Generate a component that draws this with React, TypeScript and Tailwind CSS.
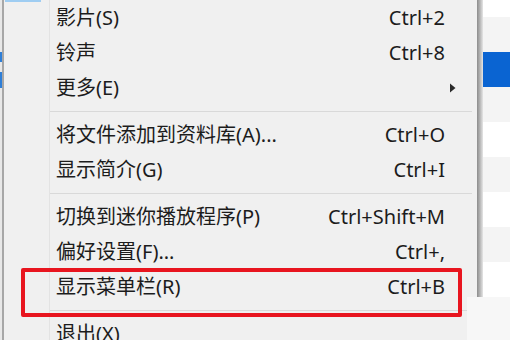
type Item =
  | { kind: "row"; label: string; shortcut?: string; submenu?: boolean }
  | { kind: "sep" };

const items: Item[] = [
  { kind: "row", label: "影片(S)", shortcut: "Ctrl+2" },
  { kind: "row", label: "铃声", shortcut: "Ctrl+8" },
  { kind: "row", label: "更多(E)", submenu: true },
  { kind: "sep" },
  { kind: "row", label: "将文件添加到资料库(A)...", shortcut: "Ctrl+O" },
  { kind: "row", label: "显示简介(G)", shortcut: "Ctrl+I" },
  { kind: "sep" },
  { kind: "row", label: "切换到迷你播放程序(P)", shortcut: "Ctrl+Shift+M" },
  { kind: "row", label: "偏好设置(F)...", shortcut: "Ctrl+," },
  { kind: "row", label: "显示菜单栏(R)", shortcut: "Ctrl+B" },
  { kind: "sep" },
  { kind: "row", label: "退出(X)" },
];

function MenuRow({ item }: { item: Item }) {
  if (item.kind === "sep") {
    return (
      <div className="h-[12px] shrink-0 flex items-center pr-[5px]">
        <div className="h-px w-full bg-[#d9d9d9]" />
      </div>
    );
  }
  return (
    <div className="h-[35px] shrink-0 flex items-center pl-[6px] pr-[32px]">
      <span className="flex-1 whitespace-nowrap">{item.label}</span>
      {item.shortcut && <span className="whitespace-nowrap">{item.shortcut}</span>}
      {item.submenu && (
        <svg width="8" height="10" viewBox="0 0 8 10" className="mr-[-12px]">
          <path d="M1 0.5 L6.5 5 L1 9.5 Z" fill="#2a2a2a" />
        </svg>
      )}
    </div>
  );
}

export default function App() {
  return (
    <div
      className="relative w-[510px] h-[340px] overflow-hidden flex bg-white text-[20px] leading-none text-[#1c1c1c]"
      style={{ fontFamily: '"Noto Sans", "Noto Sans CJK SC", sans-serif' }}
    >
      {/* app window edge on the left */}
      <div className="w-[2px] flex flex-col bg-[#e8e8e8]">
        <div className="h-[52px]" />
        <div className="h-[10px] bg-[#2f7fd8]" />
        <div className="h-[10px]" />
        <div className="h-[16px] bg-[#2f7fd8]" />
      </div>
      <div className="w-[2px] bg-[#a7a7a7]" />

      {/* context menu */}
      <div className="relative w-[473px] flex bg-[#f0f0f0]">
        <div className="absolute left-[1px] top-0 w-[36px] h-[2px] bg-[#9fcdf2]" />
        <div className="w-[46px] shrink-0 border-r border-[#e3e3e3]" />
        <div className="flex-1 flex flex-col">
          {items.map((item, i) => (
            <MenuRow key={i} item={item} />
          ))}
        </div>
      </div>

      {/* menu shadow */}
      <div className="w-[6px] bg-gradient-to-r from-[#8c8c8c] via-[#b5b5b5] to-[#e6e6e6]" />

      {/* list behind the menu */}
      <div className="flex-1 flex flex-col">
        <div className="h-[17px] shrink-0 bg-white" />
        <div className="h-[35px] shrink-0 bg-[#f4f4f4]" />
        <div className="h-[35px] shrink-0 bg-[#0a64d2]" />
        <div className="h-[35px] shrink-0 bg-[#f4f4f4]" />
        <div className="h-[35px] shrink-0 bg-white" />
        <div className="h-[35px] shrink-0 bg-[#f4f4f4]" />
        <div className="h-[35px] shrink-0 bg-white" />
        <div className="h-[35px] shrink-0 bg-[#f4f4f4]" />
        <div className="h-[35px] shrink-0 bg-white" />
        <div className="flex-1 bg-[#f4f4f4]" />
      </div>

      {/* watermark block, lower right */}
      <div className="absolute left-[467px] top-[297px] w-[43px] h-[43px] bg-[#f7f7f7]" />

      {/* red highlight box */}
      <div className="absolute left-[21px] top-[268px] w-[441px] h-[49px] border-[4px] border-[#e8151f] rounded-[2px]" />
    </div>
  );
}
